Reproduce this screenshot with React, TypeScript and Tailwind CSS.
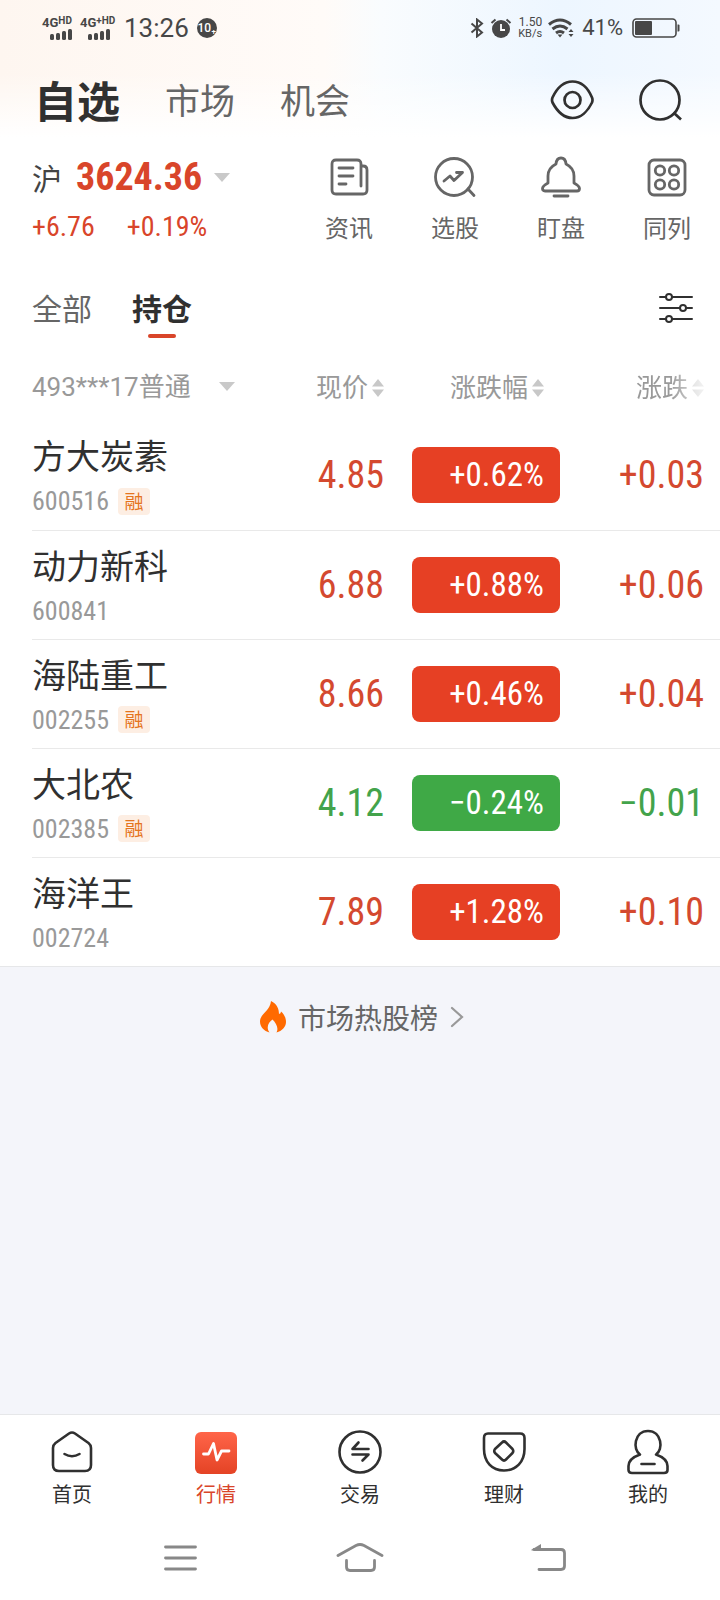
import type { ReactNode } from "react";

const NUM = "font-['Liberation_Sans_Narrow','Roboto_Condensed','Roboto',sans-serif]";

type Stock = { name: string; code: string; margin: boolean; price: string; pct: string; diff: string; up: boolean };

const stocks: Stock[] = [
  { name: "方大炭素", code: "600516", margin: true, price: "4.85", pct: "+0.62%", diff: "+0.03", up: true },
  { name: "动力新科", code: "600841", margin: false, price: "6.88", pct: "+0.88%", diff: "+0.06", up: true },
  { name: "海陆重工", code: "002255", margin: true, price: "8.66", pct: "+0.46%", diff: "+0.04", up: true },
  { name: "大北农", code: "002385", margin: true, price: "4.12", pct: "−0.24%", diff: "−0.01", up: false },
  { name: "海洋王", code: "002724", margin: false, price: "7.89", pct: "+1.28%", diff: "+0.10", up: true },
];

function Signal({ label, sup }: { label: string; sup: string }) {
  return (
    <div className="flex w-8 flex-col items-end">
      <div className="flex self-start whitespace-nowrap font-bold leading-3">
        <span className="text-[13px]">{label}</span>
        <span className="text-[10px] leading-2">{sup}</span>
      </div>
      <svg width="24" height="11" viewBox="0 0 24 11" fill="#474747" aria-hidden="true">
        <rect x="0" y="5" width="4" height="6" rx="1.500" />
        <rect x="6" y="4" width="4" height="7" rx="1.500" />
        <rect x="12" y="2" width="4" height="9" rx="1.500" />
        <rect x="18" y="0" width="4" height="11" rx="1.500" />
      </svg>
    </div>
  );
}

function StatusBar() {
  return (
    <div className="flex h-14 items-center justify-between pl-[42px] pr-10 font-['Roboto',sans-serif] text-[#474747]">
      <div className="flex items-center">
        <Signal label="4G" sup="HD" />
        <div className="ml-[6px]">
          <Signal label="4G" sup="+HD" />
        </div>
        <span className="ml-3 text-[26px] leading-8">13:26</span>
        <span className="ml-2 flex size-5 items-center justify-center rounded-full bg-[#474747] text-[12px] font-medium text-white">10₊</span>
      </div>
      <div className="flex items-center">
        <svg width="14" height="20" viewBox="0 0 14 20" fill="none" stroke="#474747" strokeWidth="2" aria-hidden="true">
          <path d="M1.500 5.500 12 14.500 7 18.500V1.500L12 5.500 1.500 14.500" />
        </svg>
        <svg className="ml-[6px]" width="22" height="20" viewBox="0 0 22 20" aria-hidden="true">
          <circle cx="11" cy="11" r="9" fill="#474747" />
          <path d="M1.500 5 5.500 1.500M20.500 5 16.500 1.500" stroke="#474747" strokeWidth="2" />
          <path d="M11 6v6h4" fill="none" stroke="#fff" strokeWidth="1.800" />
        </svg>
        <div className="ml-1 flex w-[26px] flex-col text-right">
          <span className="text-[12px] leading-3">1.50</span>
          <span className="text-[11px] leading-3">KB/s</span>
        </div>
        <svg className="ml-[6px]" width="26" height="20" viewBox="0 0 26 20" fill="none" stroke="#474747" strokeWidth="3" aria-hidden="true">
          <path d="M1 6.500Q12 -2.500 23 6.500M4.500 11Q12 5 19.500 11M8 15Q12 12 16 15" />
          <path d="M9.500 16.500h5L12 19.500z" fill="#474747" stroke="none" />
          <path d="M20.500 14l2.500-3 2.500 3zM20.500 16l2.500 3 2.500-3z" fill="#474747" stroke="none" />
        </svg>
        <span className="ml-2 text-[22px] leading-8">41%</span>
        <svg className="ml-[9px]" width="48" height="20" viewBox="0 0 48 20" aria-hidden="true">
          <rect x="1" y="1" width="43" height="18" rx="3.500" fill="none" stroke="#474747" strokeWidth="1.600" />
          <rect x="3" y="3" width="17" height="14" rx="1" fill="#474747" />
          <path d="M45.500 6.500h1q1 0 1 1v5q0 1-1 1h-1z" fill="#474747" />
        </svg>
      </div>
    </div>
  );
}

function Header() {
  return (
    <header className="flex h-[90px] items-center justify-between pb-[3px] pl-[34px] pr-9">
      <nav className="flex items-center gap-[45px] text-[35px] text-[#666]">
        <a href="#zixuan" className="text-[43px] font-bold text-[#303030]">自选</a>
        <a href="#market">市场</a>
        <a href="#chance">机会</a>
      </nav>
      <div className="flex items-center gap-11 text-[#303030]">
        <button type="button" aria-label="显示">
          <svg width="44" height="44" viewBox="0 0 44 44" fill="none" stroke="currentColor" strokeWidth="2.700">
            <path d="M2.500 19.500C7 10 14 3.500 22.500 3.500S38 10 42 19.500Q43 22 42 24.500C38 33 31 40 22.500 40S7 33 2.500 24.500Q1.500 22 2.500 19.500Z" />
            <circle cx="22.500" cy="22" r="8" />
          </svg>
        </button>
        <button type="button" aria-label="搜索">
          <svg width="46" height="44" viewBox="0 0 46 44" fill="none" stroke="currentColor" strokeWidth="2.700">
            <circle cx="22" cy="22" r="19.500" />
            <path d="M35.500 34.500 43 41.500" />
          </svg>
        </button>
      </div>
    </header>
  );
}

const tools: { label: string; icon: ReactNode }[] = [
  {
    label: "资讯",
    icon: (
      <>
        <path d="M32 29V7Q32 3 28 3H7Q3 3 3 7V33Q3 37 7 37H34Q38 37 38 33V13Q38 9 34 9H32" />
        <path d="M10 11h14M10 19h14M10 27h7" />
      </>
    ),
  },
  {
    label: "选股",
    icon: (
      <>
        <circle cx="19" cy="20" r="18.500" />
        <path d="M33 32 39 38.500" />
        <path d="M9 24 15 19l4 4.500L27.500 15.500M21.500 15.500h6" />
      </>
    ),
  },
  {
    label: "盯盘",
    icon: (
      <>
        <path d="M15 7Q15.500 1 20 1T25 7Q33 11 33 19V26Q38.500 29 38.500 31.500T36 34H4Q1.500 34 1.500 31.500T7 26V19Q7 11 15 7Z" />
        <path d="M13 39h14" />
      </>
    ),
  },
  {
    label: "同列",
    icon: (
      <>
        <rect x="2" y="3" width="36" height="35" rx="5" />
        <circle cx="13" cy="13.500" r="4.700" />
        <circle cx="27" cy="13.500" r="4.700" />
        <circle cx="13" cy="27.500" r="4.700" />
        <circle cx="27" cy="27.500" r="4.700" />
      </>
    ),
  },
];

function IndexSection() {
  return (
    <section className="flex h-[100px] justify-between pl-8">
      <button type="button" className="flex flex-col items-start text-[#d9452a]">
        <span className="flex h-[62px] items-center">
          <span className="text-[30px] leading-10 text-[#444]">沪</span>
          <span className={`ml-[14px] text-[38px] font-bold leading-[60px] ${NUM}`}>3624.36</span>
          <svg className="ml-3" width="16" height="9" viewBox="0 0 16 9" fill="#c9c9c9" aria-hidden="true">
            <path d="M0 0h16L8 9z" />
          </svg>
        </span>
        <span className={`flex gap-8 text-[28px] leading-[38px] ${NUM}`}>
          <span>+6.76</span>
          <span>+0.19%</span>
        </span>
      </button>
      <div className="grid w-[424px] grid-cols-4 pt-[11px] text-[#666]">
        {tools.map((t) => (
          <button key={t.label} type="button" className="flex flex-col items-center">
            <svg width="40" height="40" viewBox="0 0 40 40" fill="none" stroke="currentColor" strokeWidth="2.800" strokeLinecap="round" strokeLinejoin="round" overflow="visible" aria-hidden="true">
              {t.icon}
            </svg>
            <span className="mt-[14px] text-2xl leading-8">{t.label}</span>
          </button>
        ))}
      </div>
    </section>
  );
}

function Groups() {
  return (
    <div className="mt-5 flex h-[86px] items-center justify-between pl-8 pr-6">
      <nav className="flex gap-10 pb-1 text-[30px] leading-10">
        <a href="#all" className="text-[#666]">全部</a>
        <a href="#hold" className="relative font-bold text-[#303030]">
          持仓
          <span className="absolute -bottom-[11px] left-1/2 h-1 w-7 -translate-x-1/2 rounded-xs bg-[#d9452a]" />
        </a>
      </nav>
      <button type="button" aria-label="筛选">
        <svg width="40" height="32" viewBox="0 0 40 32" stroke="#303030" strokeWidth="2" fill="#fff" strokeLinecap="round">
          <path d="M4 4h32M4 15h32M4 26h32" />
          <circle cx="13" cy="4" r="3" />
          <circle cx="27" cy="15" r="3" />
          <circle cx="13" cy="26" r="3" />
        </svg>
      </button>
    </div>
  );
}

function SortButton({ label, fade }: { label: string; fade?: boolean }) {
  return (
    <button
      type="button"
      className={`inline-flex items-center gap-1 align-middle ${fade ? "[mask-image:linear-gradient(to_right,#000_50%,transparent_115%)]" : ""}`}
    >
      <span className="pb-[3px]">{label}</span>
      <svg width="12" height="18" viewBox="0 0 12 18" fill="#c8c8c8" aria-hidden="true">
        <path d="M0 7.500 6 0l6 7.500zM0 10.500 6 18l6-7.500z" />
      </svg>
    </button>
  );
}

function StockTable() {
  return (
    <div className="pl-8">
      <table className="w-full table-fixed border-collapse">
        <thead>
          <tr className="h-[69px] text-[26px] leading-9 text-[#999]">
            <th scope="col" className="p-0 text-left font-normal">
              <button type="button" className="flex items-center gap-7 whitespace-nowrap">
                <span className="font-['Roboto','Noto_Sans_CJK_SC',sans-serif]">493***17普通</span>
                <svg width="16" height="9" viewBox="0 0 16 9" fill="#c9c9c9" aria-hidden="true">
                  <path d="M0 0h16L8 9z" />
                </svg>
              </button>
            </th>
            <th scope="col" className="w-[120px] p-0 text-right font-normal"><SortButton label="现价" /></th>
            <th scope="col" className="w-44 p-0 pr-4 text-right font-normal"><SortButton label="涨跌幅" /></th>
            <th scope="col" className="w-40 p-0 pr-4 text-right font-normal"><SortButton label="涨跌" fade /></th>
          </tr>
        </thead>
        <tbody>
          {stocks.map((s) => (
            <tr key={s.code} className={`h-[109px] border-b border-[#e9e9e9] last:border-b-0 ${s.up ? "text-[#d4492f]" : "text-[#43a34b]"}`}>
              <td className="p-0 align-top">
                <div className="pt-[10px] text-[34px] leading-12 text-[#303030]">{s.name}</div>
                <div className="mt-[6px] flex h-8 items-center gap-[9px]">
                  <span className={`text-[26px] leading-8 text-[#999] ${NUM}`}>{s.code}</span>
                  {s.margin && (
                    <span className="flex h-[27px] w-8 items-center justify-center rounded-sm bg-[#fdeee3] text-[19px] leading-[25px] text-[#e5741e]">
                      <span className="pb-[2px]">融</span>
                    </span>
                  )}
                </div>
              </td>
              <td className={`p-0 text-right text-[38px] leading-12 ${NUM}`}>{s.price}</td>
              <td className="p-0 pl-7">
                <div className={`h-14 rounded-lg pr-4 text-right text-[33px] leading-14 text-white ${NUM} ${s.up ? "bg-[#e64024]" : "bg-[#3fa946]"}`}>{s.pct}</div>
              </td>
              <td className={`p-0 pr-4 text-right text-[38px] leading-12 ${NUM}`}>{s.diff}</td>
            </tr>
          ))}
        </tbody>
      </table>
    </div>
  );
}

const tabs: { label: string; active?: boolean; icon: ReactNode }[] = [
  {
    label: "首页",
    icon: (
      <>
        <path d="M19 3.500Q22 1.500 25 3.500L38.500 13Q41 15 41 18V35Q41 41 35 41H9Q3 41 3 35V18Q3 15 5.500 13Z" />
        <path d="M14.500 24Q22 28.500 29.500 24" />
      </>
    ),
  },
  {
    label: "行情",
    active: true,
    icon: (
      <>
        <defs>
          <linearGradient id="marketTile" x1="0" y1="0" x2="0" y2="1">
            <stop offset="0" stopColor="#ff6549" />
            <stop offset="1" stopColor="#e44325" />
          </linearGradient>
        </defs>
        <rect x="1" y="2" width="42" height="42" rx="6" fill="url(#marketTile)" stroke="none" />
        <path d="M9.500 24H14.500L19.500 13.500 23 30 27.500 21H35" stroke="#fff" strokeWidth="2.800" />
      </>
    ),
  },
  {
    label: "交易",
    icon: (
      <>
        <circle cx="22" cy="22" r="20.500" />
        <path d="M30.500 19H14.500L20.500 12.500M14.500 24.500H30.500L24.500 30.500" />
      </>
    ),
  },
  {
    label: "理财",
    icon: (
      <>
        <path d="M6 3.500H38Q42.500 3.500 42.500 8V19C42.500 32 34 40.500 22 40.500S2 32 2 19V8Q2 3.500 6 3.500Z" />
        <path d="M20 12.500Q22 10.500 24 12.500L30.500 19Q32 21 30.500 23L24 29.500Q22 31.500 20 29.500L13 23Q11.500 21 13 19Z" />
      </>
    ),
  },
  {
    label: "我的",
    icon: (
      <>
        <path d="M14 24.500C6.500 20 8 1 22 1S37.500 20 30 24.500C37 27 41.500 30 41.500 36V40Q41.500 43 38 43H6Q2.500 43 2.500 40V36C2.500 30 7 27 14 24.500" />
        <path d="M15.500 34h13" />
      </>
    ),
  },
];

function BottomBar() {
  return (
    <footer className="border-t border-[#e6e7e9] bg-white">
      <nav className="grid grid-cols-5 pb-2 pt-[15px]">
        {tabs.map((t) => (
          <a key={t.label} href={`#${t.label}`} className={`flex flex-col items-center ${t.active ? "text-[#d9452a]" : "text-[#303030]"}`}>
            <svg width="44" height="44" viewBox="0 0 44 44" fill="none" stroke="currentColor" strokeWidth="2.600" strokeLinecap="round" strokeLinejoin="round" overflow="visible" aria-hidden="true">
              {t.icon}
            </svg>
            <span className="mt-[6px] text-xl leading-7">{t.label}</span>
          </a>
        ))}
      </nav>
      <div className="flex h-21 items-center justify-between px-[155px]">
        <button type="button" aria-label="最近任务">
          <svg width="48" height="32" viewBox="0 0 48 32" stroke="#888" strokeWidth="2.800" strokeLinecap="round" fill="none">
            <path d="M10.500 5h30M10.500 16h30M10.500 27h30" />
          </svg>
        </button>
        <button type="button" aria-label="主屏幕">
          <svg width="48" height="32" viewBox="0 0 48 32" stroke="#888" strokeWidth="2.800" strokeLinecap="round" fill="none">
            <path d="M2 13.500 20 3.500Q24 1.500 28 3.500L46 13.500M10.500 18.500V25Q10.500 28.500 14 28.500H35Q38.500 28.500 38.500 25V18.500" />
          </svg>
        </button>
        <button type="button" aria-label="返回">
          <svg width="48" height="32" viewBox="-9 0 48 32" stroke="#888" strokeWidth="2.800" strokeLinecap="round" fill="none" overflow="visible">
            <path d="M8 7.500H35Q38.500 7.500 38.500 11V24Q38.500 27.500 35 27.500H13" />
            <path d="M5 8 15 2V8.500H6Z" fill="#888" stroke="none" />
          </svg>
        </button>
      </div>
    </footer>
  );
}

export default function App() {
  return (
    <div className="flex min-h-screen flex-col bg-white font-['Noto_Sans_CJK_SC',sans-serif]">
      <div className="bg-[linear-gradient(to_bottom,transparent_50%,#fff_94%),linear-gradient(to_right,#fef6f0,#fffbf8_45%,#f9fcfe_53%,#edf6ff_78%,#f4f9ff)]">
        <StatusBar />
        <Header />
      </div>
      <IndexSection />
      <Groups />
      <StockTable />
      <main className="flex-1 border-t border-[#e6e7e9] bg-[#f4f5fa]">
        <a href="#hot" className="flex h-[100px] items-center justify-center pl-1 text-[28px] text-[#666]">
          <svg width="26" height="32" viewBox="0 0 26 32" fill="#ff6a00" aria-hidden="true">
            <path d="M11 0C17 3 19 8 19 13Q21 12.500 21 10.500C25 14 26 18 26 21C26 26 22 30 16.500 31.500C19 27 16 22 12.500 18.500C9 21 5.500 26 9.500 31.500C4 30 0 26 0 20.500C0 13 10 10 11 0Z" />
          </svg>
          <span className="ml-3">市场热股榜</span>
          <svg className="ml-3" width="14" height="22" viewBox="0 0 14 22" fill="none" stroke="#999" strokeWidth="2.200" strokeLinecap="round" aria-hidden="true">
            <path d="M2 2 12 11 2 20" />
          </svg>
        </a>
      </main>
      <BottomBar />
    </div>
  );
}
